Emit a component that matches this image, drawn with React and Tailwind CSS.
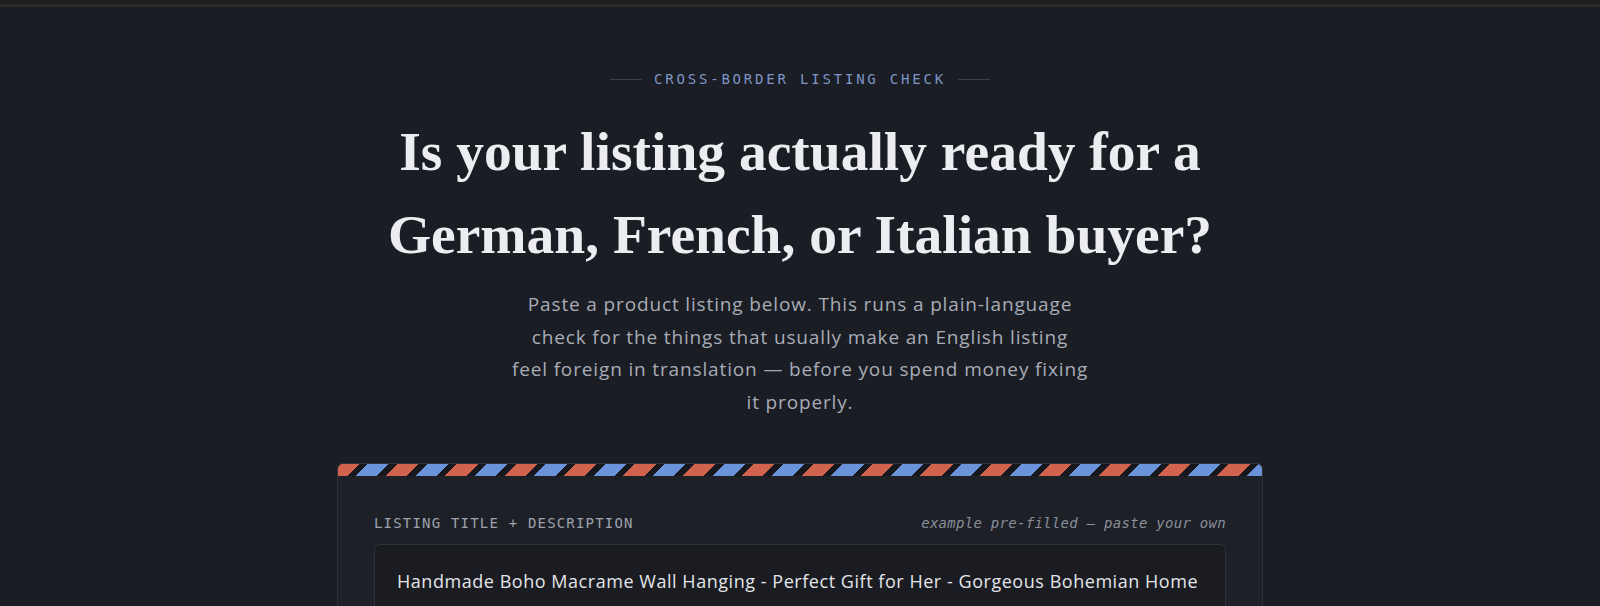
export default function App() {
  const mono = { fontFamily: '"DejaVu Sans Mono", "Liberation Mono", monospace' };
  const serif = { fontFamily: '"Liberation Serif", "DejaVu Serif", serif' };
  const sans = { fontFamily: '"Open Sans", "Noto Sans", sans-serif' };

  return (
    <div className="h-[606px] bg-[#1a1d24] overflow-hidden">
      {/* top chrome strip */}
      <div className="h-[7px] bg-[#1f1f1f] border-b-[3px] border-[#2a2a2a]" />

      <main className="flex flex-col items-center pt-[62px]">
        {/* Eyebrow */}
        <div className="flex items-center gap-3">
          <span className="w-8 h-px bg-[#3a3e48]" />
          <span style={mono} className="text-[14px] tracking-[0.2em] uppercase text-[#7f95c6] leading-5">
            Cross-border listing check
          </span>
          <span className="w-8 h-px bg-[#3a3e48]" />
        </div>

        {/* Heading */}
        <h1
          style={serif}
          className="mt-[21px] text-center text-[55.5px] font-bold leading-[83px] text-[#ecedf0] max-w-[900px]"
        >
          Is your listing actually ready for a
          <br />
          German, French, or Italian buyer?
        </h1>

        {/* Lede */}
        <p
          style={sans}
          className="mt-[12px] text-center text-[19px] tracking-[0.045em] leading-[32.7px] text-[#a8acb6]"
        >
          Paste a product listing below. This runs a plain-language
          <br />
          check for the things that usually make an English listing
          <br />
          feel foreign in translation — before you spend money fixing
          <br />
          it properly.
        </p>

        {/* Card */}
        <section className="mt-[44px] w-[926px] rounded-t-[6px] border border-[#2e313a] bg-[#1e2028] overflow-hidden">
          <div className="h-[12px] bg-[repeating-linear-gradient(135deg,#d1624d_0_15px,#16181d_15px_21px,#6b93da_21px_36px,#16181d_36px_42px)]" />
          <div className="px-9 pt-[37px]">
            <div className="flex items-center justify-between">
              <span style={mono} className="text-[14px] tracking-[0.085em] uppercase text-[#9da2ac]">
                Listing title + description
              </span>
              <span style={mono} className="text-[14px] tracking-[0.02em] italic text-[#8a8f99]">
                example pre-filled — paste your own
              </span>
            </div>
            <div className="mt-[10px] rounded-[6px] border border-[#2f323b] bg-[#1a1c22] px-[22px] pt-[22px] pb-10">
              <p style={sans} className="text-[18px] tracking-[0.03em] leading-7 text-[#e4e5e9]">
                Handmade Boho Macrame Wall Hanging - Perfect Gift for Her - Gorgeous Bohemian Home
              </p>
            </div>
          </div>
        </section>
      </main>
    </div>
  );
}
